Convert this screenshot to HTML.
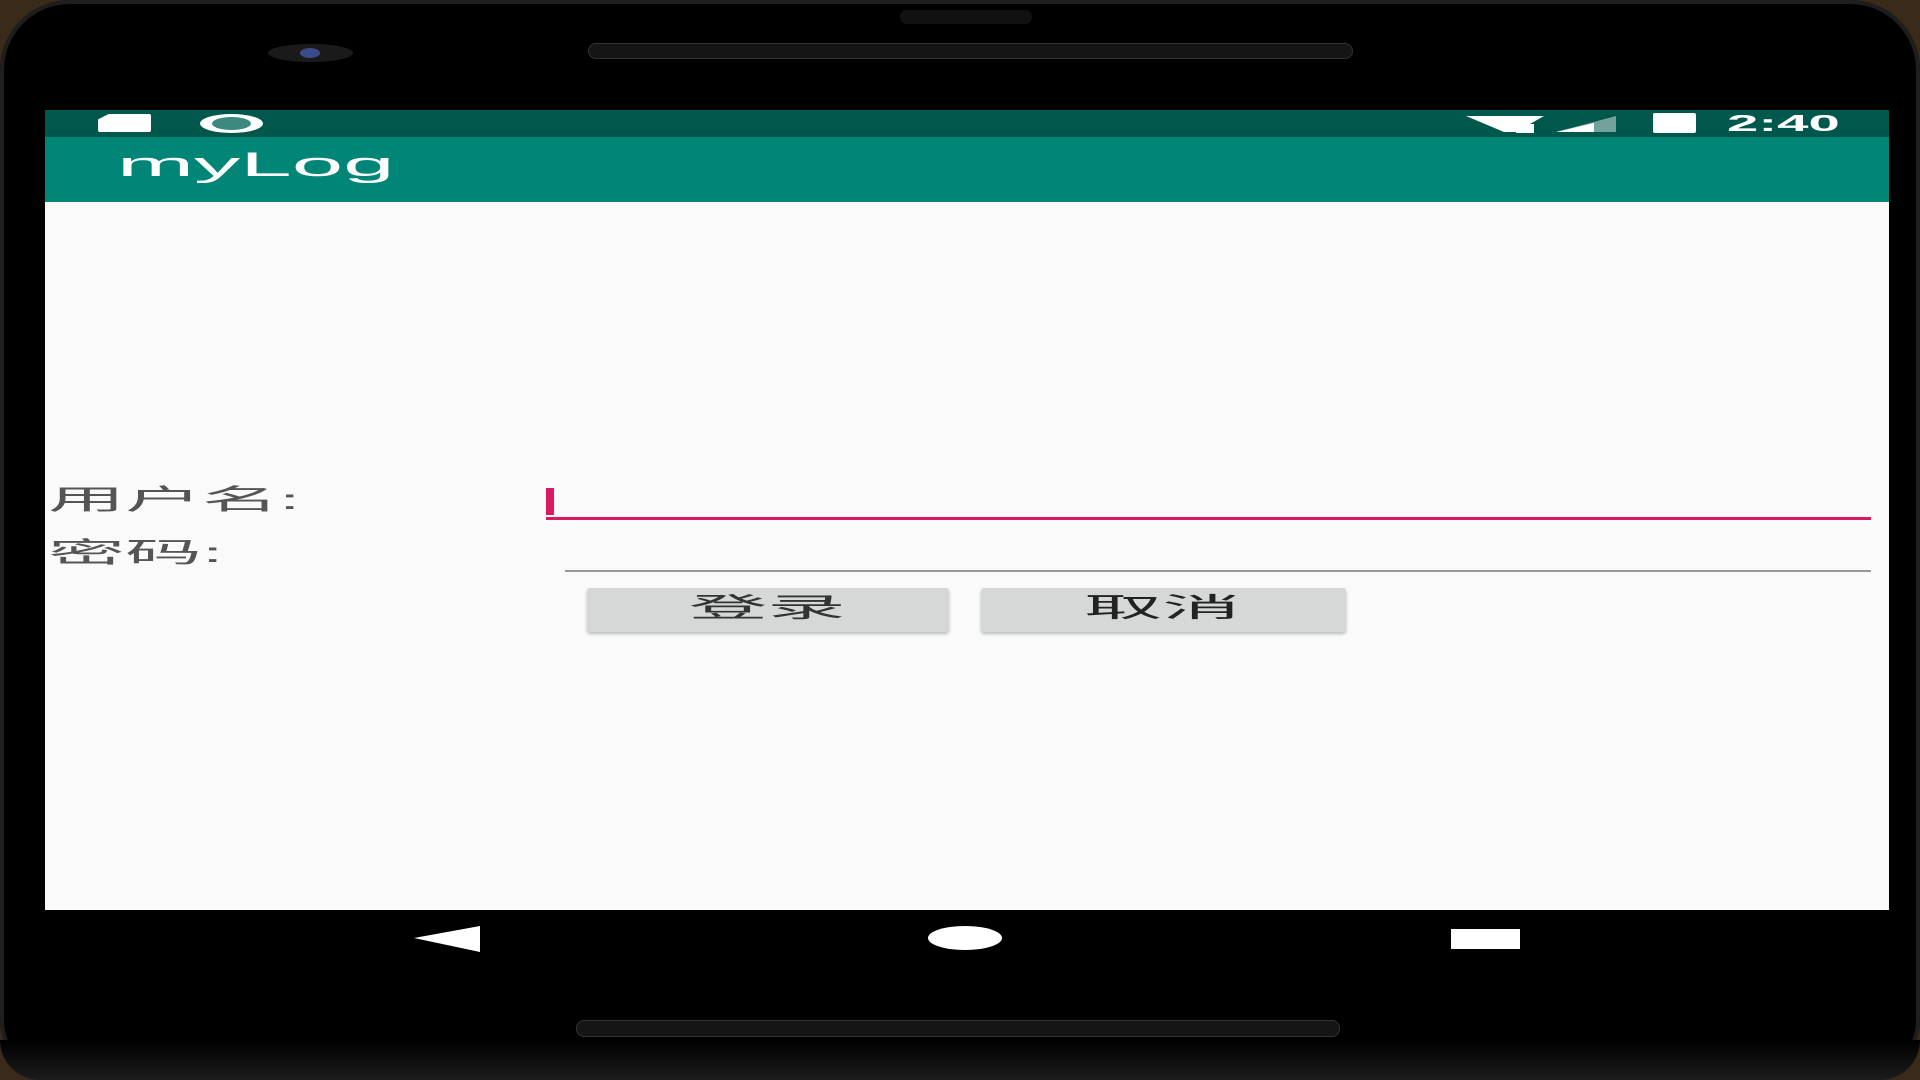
<!DOCTYPE html>
<html><head><meta charset="utf-8"><style>
*{margin:0;padding:0;box-sizing:border-box}
body{width:1920px;height:1080px;overflow:hidden;background:#3a2a1a;position:relative;font-family:"Liberation Sans","Noto Sans CJK SC",sans-serif}
.phone{position:absolute;left:0;top:0;width:1920px;height:1080px;background:#000;border-radius:70px 70px 60px 60px;box-shadow:inset 0 0 0 4px #1e1e1e}
.abs{position:absolute}
.st{left:45px;top:110px;width:1844px;height:27px;background:#00574B}
.ab{left:45px;top:137px;width:1844px;height:65px;background:#008577;box-shadow:0 2px 3px rgba(0,0,0,.25)}
.ct{left:45px;top:202px;width:1844px;height:708px;background:#FAFAFA}
.sx{display:inline-block;transform-origin:0 0;white-space:nowrap}
</style></head><body>
<div class="phone"></div>
<div class="abs" style="left:900px;top:10px;width:132px;height:14px;border-radius:7px;background:#111"></div>
<div class="abs" style="left:268px;top:44px;width:85px;height:18px;border-radius:50%;background:#1a1a1a"></div>
<div class="abs" style="left:300px;top:48px;width:20px;height:10px;border-radius:50%;background:#3a4a8a"></div>
<div class="abs" style="left:588px;top:43px;width:765px;height:16px;border-radius:8px;background:#151515;border:1px solid #333"></div>
<div class="abs" style="left:576px;top:1020px;width:764px;height:17px;border-radius:8px;background:#151515;border:1px solid #333"></div>
<div class="abs" style="left:0;top:1040px;width:1920px;height:40px;background:linear-gradient(#000,#1c1c1c);border-radius:0 0 60px 60px"></div>

<div class="abs st"></div>
<div class="abs" style="left:98px;top:114px;width:53px;height:18px;background:#fff;border-radius:2px;clip-path:polygon(20% 0,100% 0,100% 100%,0 100%,0 30%)"></div>
<div class="abs" style="left:200px;top:114px;width:63px;height:19px;border-radius:50%;background:#fff"></div>
<div class="abs" style="left:212px;top:117px;width:39px;height:13px;border-radius:50%;background:#3c8a7e"></div>
<svg class="abs" style="left:1466px;top:115px" width="155" height="18"><polygon points="0,1 78,1 50,17 38,17" fill="#fff"/><rect x="50" y="9" width="18" height="9" fill="#fff"/><polygon points="90,17 150,17 150,1" fill="#fff" opacity=".45"/><polygon points="90,17 128,17 128,8" fill="#fff"/></svg>
<div class="abs" style="left:1653px;top:113px;width:43px;height:20px;background:#fff;border-radius:2px"></div>
<div class="abs" style="left:1727px;top:110px;color:#fff;font-size:23px;line-height:26px;font-weight:bold"><span class="sx" style="transform:scaleX(2.45)">2:40</span></div>

<div class="abs ab"></div>
<div class="abs" style="left:117px;top:146px;color:#fff;font-size:34px;line-height:38px"><span class="sx" style="transform:scaleX(2.72)">myLog</span></div>

<div class="abs ct"></div>
<div class="abs" style="left:48px;top:484px;color:#555;font-size:28px;line-height:32px"><span class="sx" style="transform:scaleX(2.75)">用户名:</span></div>
<div class="abs" style="left:48px;top:537px;color:#555;font-size:28px;line-height:32px"><span class="sx" style="transform:scaleX(2.75)">密码:</span></div>
<div class="abs" style="left:546px;top:488px;width:8px;height:27px;background:#D81B60"></div>
<div class="abs" style="left:546px;top:517px;width:1325px;height:3px;background:#D81B60"></div>
<div class="abs" style="left:565px;top:570px;width:1306px;height:2px;background:#999"></div>
<div class="abs" style="left:587px;top:588px;width:362px;height:44px;background:#D6D7D7;border-radius:3px;box-shadow:0 2px 3px rgba(0,0,0,.25)"></div>
<div class="abs" style="left:981px;top:588px;width:365px;height:44px;background:#D6D7D7;border-radius:3px;box-shadow:0 2px 3px rgba(0,0,0,.25)"></div>
<div class="abs" style="left:689px;top:592px;color:#333;font-size:27px;line-height:32px"><span class="sx" style="transform:scaleX(2.9)">登录</span></div>
<div class="abs" style="left:1084px;top:592px;color:#222;font-size:27px;line-height:32px"><span class="sx" style="transform:scaleX(2.9)">取消</span></div>

<svg class="abs" style="left:400px;top:925px" width="1140" height="28"><polygon points="14,13 80,1 80,27" fill="#fff"/><ellipse cx="565" cy="13" rx="37" ry="12" fill="#fff"/><rect x="1051" y="4" width="69" height="20" fill="#fff"/></svg>
</body></html>
